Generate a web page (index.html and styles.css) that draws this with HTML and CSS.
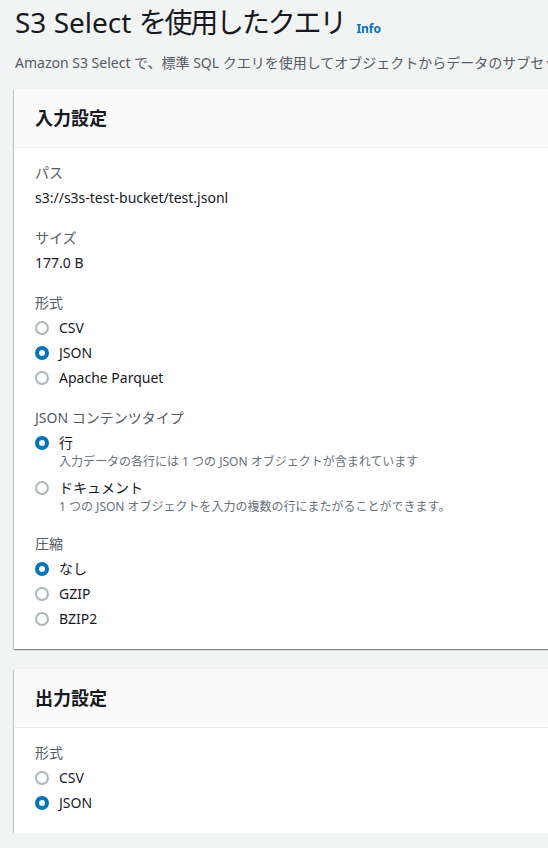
FILE: index.html
```html
<!DOCTYPE html>
<html lang="ja">
<head>
<meta charset="utf-8">
<title>S3 Select を使用したクエリ</title>
<link rel="stylesheet" href="styles.css">
</head>
<body>
<main class="page">
  <header class="page-head">
    <h1 class="title">S3 Select <span class="jp">を使用したクエリ</span> <a class="info" href="#">Info</a></h1>
    <p class="desc">Amazon S3 Select で、標準 SQL クエリを使用してオブジェクトからデータのサブセットを取得します。</p>
  </header>

  <section class="card">
    <div class="card-head"><h2>入力設定</h2></div>
    <div class="card-body">
      <div class="field">
        <div class="label">パス</div>
        <div class="value">s3://s3s-test-bucket/test.jsonl</div>
      </div>
      <div class="field">
        <div class="label">サイズ</div>
        <div class="value">177.0 B</div>
      </div>
      <div class="field">
        <div class="label">形式</div>
        <div class="radios">
          <div class="radio"><span class="dot"></span><span class="rtext">CSV</span></div>
          <div class="radio"><span class="dot on"></span><span class="rtext">JSON</span></div>
          <div class="radio"><span class="dot"></span><span class="rtext">Apache Parquet</span></div>
        </div>
      </div>
      <div class="field">
        <div class="label">JSON コンテンツタイプ</div>
        <div class="radios wide">
          <div class="radio"><span class="dot on"></span><span class="rtext">行<span class="rdesc">入力データの各行には 1 つの JSON オブジェクトが含まれています</span></span></div>
          <div class="radio"><span class="dot"></span><span class="rtext">ドキュメント<span class="rdesc">1 つの JSON オブジェクトを入力の複数の行にまたがることができます。</span></span></div>
        </div>
      </div>
      <div class="field">
        <div class="label">圧縮</div>
        <div class="radios">
          <div class="radio"><span class="dot on"></span><span class="rtext">なし</span></div>
          <div class="radio"><span class="dot"></span><span class="rtext">GZIP</span></div>
          <div class="radio"><span class="dot"></span><span class="rtext">BZIP2</span></div>
        </div>
      </div>
    </div>
  </section>

  <section class="card">
    <div class="card-head"><h2>出力設定</h2></div>
    <div class="card-body">
      <div class="field">
        <div class="label">形式</div>
        <div class="radios">
          <div class="radio"><span class="dot"></span><span class="rtext">CSV</span></div>
          <div class="radio"><span class="dot on"></span><span class="rtext">JSON</span></div>
        </div>
      </div>
    </div>
  </section>
</main>
</body>
</html>
```

FILE: styles.css
```css
html, body {
  margin: 0;
  padding: 0;
  background: #f2f3f3;
  overflow: hidden;
}
body {
  font-family: "Noto Sans", "Noto Sans CJK JP", sans-serif;
  font-size: 14px;
  line-height: 22px;
  color: #16191f;
}
.page {
  width: 640px;
  padding: 4px 0 0 14px;
}
.page-head {
  padding-left: 1px;
}
.title {
  margin: 0;
  font-size: 28px;
  line-height: 36px;
  font-weight: 400;
  color: #16191f;
  white-space: nowrap;
}
.title .jp {
  letter-spacing: -2.2px;
}
.info {
  font-size: 12px;
  font-weight: 700;
  color: #0073bb;
  text-decoration: none;
  margin-left: 4px;
}
.desc {
  margin: 5px 0 0;
  font-size: 14px;
  line-height: 22px;
  color: #545b64;
  white-space: nowrap;
}
.card {
  margin-top: 15px;
  background: #fff;
  box-shadow: 0 1px 1px 0 rgba(0, 28, 36, 0.3), 1px 1px 1px 0 rgba(0, 28, 36, 0.15), -1px 1px 1px 0 rgba(0, 28, 36, 0.15);
}
.card + .card {
  margin-top: 20px;
}
.card-head {
  background: #fafafa;
  border-bottom: 1px solid #eaeded;
  padding: 19px 21px;
}
.card-head h2 {
  margin: 0;
  font-size: 18px;
  line-height: 20px;
  font-weight: 700;
  color: #16191f;
}
.card-body {
  padding: 14px 21px 19px;
  display: flex;
  flex-direction: column;
  gap: 18px;
}
.label {
  color: #545b64;
  line-height: 22px;
  margin-bottom: 3px;
}
.value {
  line-height: 22px;
}
.radios {
  display: flex;
  flex-direction: column;
  gap: 3px;
}
.radios.wide {
  gap: 7px;
}
.radio {
  display: flex;
  align-items: flex-start;
  gap: 10px;
}
.dot {
  flex: none;
  box-sizing: border-box;
  width: 14px;
  height: 14px;
  margin-top: 4px;
  border-radius: 50%;
  border: 2px solid #aab7b8;
  background: #fff;
}
.dot.on {
  border: 4px solid #0073bb;
}
.rtext {
  display: flex;
  flex-direction: column;
  line-height: 22px;
}
.rdesc {
  font-size: 12px;
  line-height: 16px;
  color: #687078;
}
```
